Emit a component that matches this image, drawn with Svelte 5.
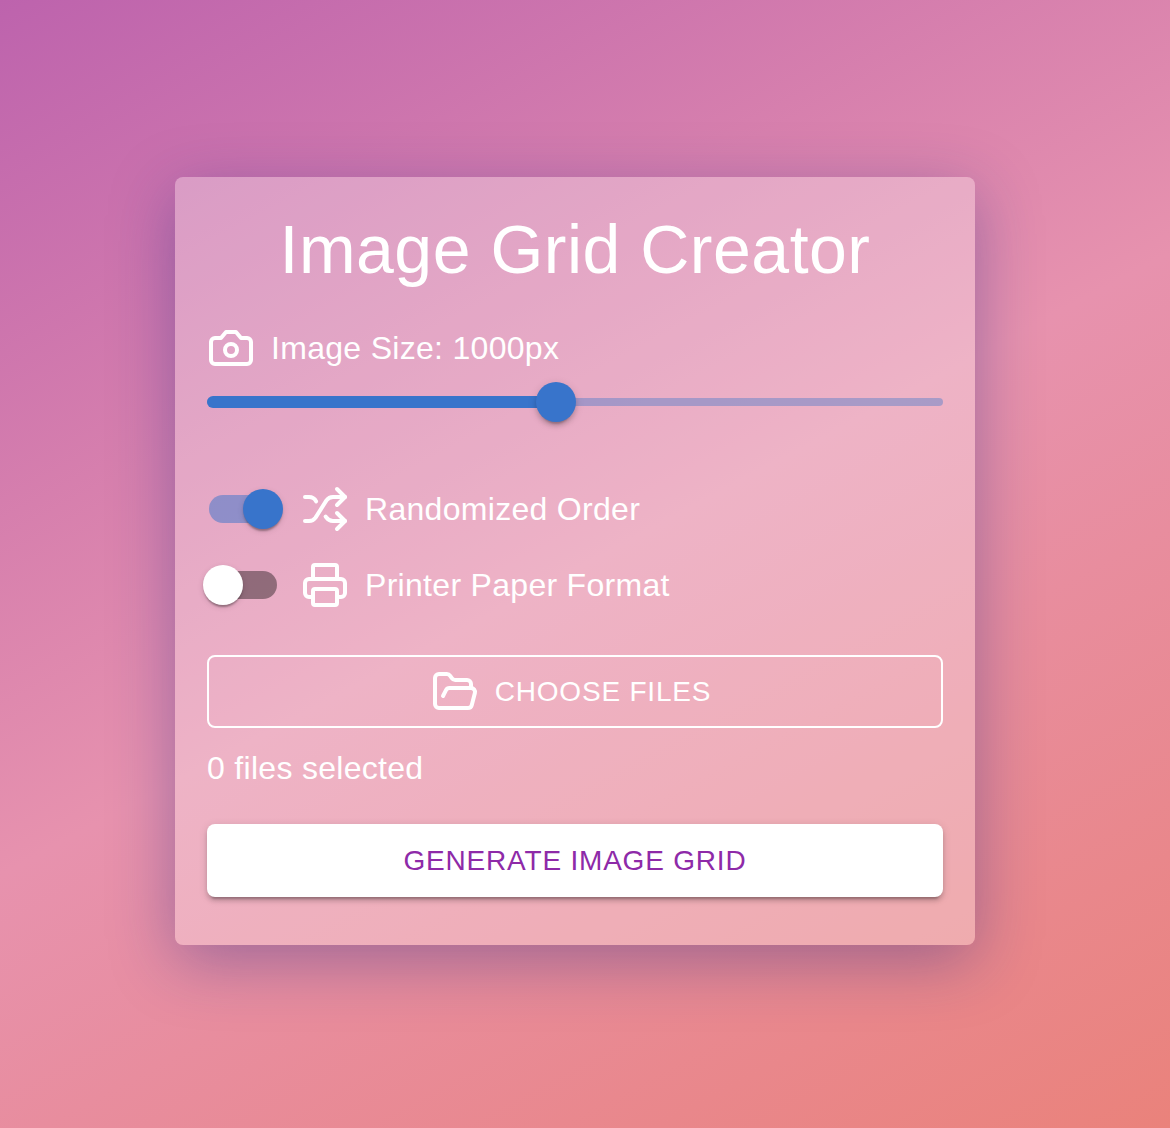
<script lang="ts">
  let size = $state(1000);
  const min = 100;
  const max = 2000;
  let percent = $derived(((size - min) / (max - min)) * 100);
  let randomized = $state(true);
  let printer = $state(false);
</script>

<main class="page">
  <section class="card">
    <h1>Image Grid Creator</h1>

    <div class="label">
      <svg class="icon" viewBox="0 0 24 24">
        <path d="M14.5 4h-5L7 7H4a2 2 0 0 0-2 2v9a2 2 0 0 0 2 2h16a2 2 0 0 0 2-2V9a2 2 0 0 0-2-2h-3l-2.5-3z" />
        <circle cx="12" cy="13" r="3" />
      </svg>
      <span>Image Size: {size}px</span>
    </div>

    <div class="slider">
      <div class="rail"></div>
      <div class="track" style:width="{percent}%"></div>
      <div class="thumb knob" style:left="{percent}%"></div>
    </div>

    <div class="options">
      <div class="option">
        <button class="switch" class:on={randomized} aria-label="Randomized Order" onclick={() => (randomized = !randomized)}>
          <span class="groove"></span><span class="thumb"></span>
        </button>
        <svg class="icon" viewBox="0 0 24 24">
          <path d="m18 14 4 4-4 4" />
          <path d="m18 2 4 4-4 4" />
          <path d="M2 18h1.973a4 4 0 0 0 3.3-1.7l5.454-8.6a4 4 0 0 1 3.3-1.7H22" />
          <path d="M2 6h1.972a4 4 0 0 1 3.6 2.2" />
          <path d="M22 18h-6.041a4 4 0 0 1-3.3-1.8l-.359-.45" />
        </svg>
        <span>Randomized Order</span>
      </div>
      <div class="option">
        <button class="switch" class:on={printer} aria-label="Printer Paper Format" onclick={() => (printer = !printer)}>
          <span class="groove"></span><span class="thumb"></span>
        </button>
        <svg class="icon" viewBox="0 0 24 24">
          <path d="M6 18H4a2 2 0 0 1-2-2v-5a2 2 0 0 1 2-2h16a2 2 0 0 1 2 2v5a2 2 0 0 1-2 2h-2" />
          <path d="M6 9V3a1 1 0 0 1 1-1h10a1 1 0 0 1 1 1v6" />
          <rect x="6" y="14" width="12" height="8" rx="1" />
        </svg>
        <span>Printer Paper Format</span>
      </div>
    </div>

    <button class="btn outlined">
      <svg class="icon" viewBox="0 0 24 24">
        <path d="m6 14 1.5-2.9A2 2 0 0 1 9.24 10H20a2 2 0 0 1 1.94 2.5l-1.54 6a2 2 0 0 1-1.95 1.5H4a2 2 0 0 1-2-2V5a2 2 0 0 1 2-2h3.9a2 2 0 0 1 1.69.9l.81 1.2a2 2 0 0 0 1.67.9H18a2 2 0 0 1 2 2v2" />
      </svg>
      <span>Choose Files</span>
    </button>
    <p>0 files selected</p>
    <button class="btn contained">Generate Image Grid</button>
  </section>
</main>

<style>
  .page {
    box-sizing: border-box;
    min-height: 1128px;
    padding: 177px 195px 183px 175px;
    background: linear-gradient(152deg, #bd63ad 0%, #e792ae 50%, #ea827b 100%);
    font-family: "Liberation Sans", Arial, sans-serif;
    color: #fff;
  }
  .card {
    box-sizing: border-box;
    height: 768px;
    padding: 32px;
    border-radius: 8px;
    background: rgba(255, 255, 255, 0.3);
    box-shadow: 0 16px 64px rgba(31, 38, 135, 0.37);
    font-size: 32px;
    line-height: 48px;
    letter-spacing: 0.3px;
  }
  h1 {
    margin: 0;
    font-size: 68px;
    font-weight: 400;
    line-height: 80px;
    letter-spacing: 0.5px;
    text-align: center;
  }
  .icon {
    flex: none;
    width: 48px;
    height: 48px;
    fill: none;
    stroke: currentColor;
    stroke-width: 2;
    stroke-linecap: round;
    stroke-linejoin: round;
  }
  .label {
    display: flex;
    align-items: center;
    gap: 16px;
    margin-top: 35px;
  }
  .slider {
    position: relative;
    height: 8px;
    margin-top: 26px;
  }
  .rail {
    height: 8px;
    border-radius: 4px;
    background: #3874cb;
    opacity: 0.38;
  }
  .track {
    position: absolute;
    top: -2px;
    left: 0;
    height: 12px;
    border-radius: 6px;
    background: #3874cb;
  }
  .thumb {
    width: 40px;
    height: 40px;
    border-radius: 50%;
    background: #fff;
    box-shadow:
      0 4px 2px -2px rgba(0, 0, 0, 0.2),
      0 2px 2px rgba(0, 0, 0, 0.14),
      0 2px 6px rgba(0, 0, 0, 0.12);
  }
  .knob {
    position: absolute;
    top: -16px;
    margin-left: -20px;
    background: #3874cb;
    box-shadow:
      0 6px 2px -4px rgba(0, 0, 0, 0.2),
      0 4px 4px rgba(0, 0, 0, 0.14),
      0 2px 10px rgba(0, 0, 0, 0.12);
  }
  .options {
    margin: 65px 0 32px -22px;
  }
  .option {
    display: flex;
    align-items: center;
    height: 76px;
  }
  .option .icon {
    margin-right: 16px;
  }
  .switch {
    position: relative;
    width: 116px;
    height: 76px;
    padding: 24px;
    border: 0;
    background: none;
  }
  .groove {
    display: block;
    width: 68px;
    height: 28px;
    border-radius: 14px;
    background: #000;
    opacity: 0.38;
  }
  .switch .thumb {
    position: absolute;
    top: 18px;
    left: 18px;
  }
  .on .groove {
    background: #3874cb;
    opacity: 0.5;
  }
  .switch.on .thumb {
    left: 58px;
    background: #3874cb;
  }
  .btn {
    box-sizing: border-box;
    display: flex;
    align-items: center;
    justify-content: center;
    gap: 16px;
    width: 100%;
    height: 73px;
    border: 0;
    border-radius: 8px;
    font: 400 28px/49px "Liberation Sans", Arial, sans-serif;
    letter-spacing: 0.8px;
    text-transform: uppercase;
  }
  .outlined {
    padding: 0 14px 0 6px;
    border: 2px solid #fff;
    background: none;
    color: #fff;
  }
  .contained {
    background: #fff;
    color: #8e2aa8;
    box-shadow:
      0 6px 2px -4px rgba(0, 0, 0, 0.2),
      0 4px 4px rgba(0, 0, 0, 0.14),
      0 2px 10px rgba(0, 0, 0, 0.12);
  }
  p {
    margin: 16px 0 32px;
  }
</style>
